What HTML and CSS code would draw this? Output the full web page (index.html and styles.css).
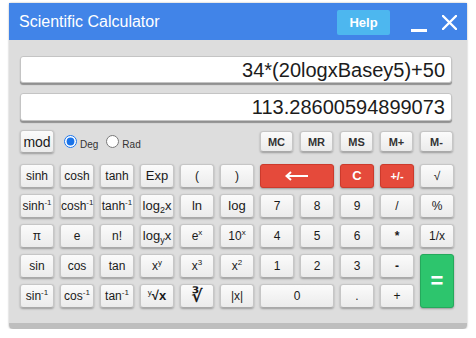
FILE: index.html
```html
<!DOCTYPE html>
<html lang="en">
<head>
    <meta charset="UTF-8">
    <meta name="viewport" content="width=device-width, initial-scale=1.0">
    <title>Scientific Calculator</title>
    <link rel="stylesheet" href="styles.css">
</head>
<body>
    <div class="calc">
        <div class="titlebar">
            <span class="title">Scientific Calculator</span>
            <button class="help">Help</button>
            <svg class="win-btn min" width="16" height="20" viewBox="0 0 16 20">
                <rect x="0" y="17" width="16" height="3" fill="#fff"/>
            </svg>
            <svg class="win-btn close" width="15" height="15" viewBox="0 0 15 15">
                <path d="M1 1 L14 14 M14 1 L1 14" stroke="#fff" stroke-width="2.4" stroke-linecap="round"/>
            </svg>
        </div>

        <div class="body">
            <div class="display">34*(20logxBasey5)+50</div>
            <div class="display result">113.28600594899073</div>

            <div class="mode-row">
                <button class="key mod">mod</button>
                <div class="angle">
                    <label><input type="radio" name="angle" checked><span>Deg</span></label>
                    <label><input type="radio" name="angle"><span>Rad</span></label>
                </div>
                <button class="key mem">MC</button>
                <button class="key mem">MR</button>
                <button class="key mem">MS</button>
                <button class="key mem">M+</button>
                <button class="key mem">M-</button>
            </div>

            <div class="keys">
                <!-- row 1 -->
                <button class="key">sinh</button>
                <button class="key">cosh</button>
                <button class="key">tanh</button>
                <button class="key big">Exp</button>
                <button class="key">(</button>
                <button class="key">)</button>
                <button class="key red wide">
                    <svg class="back" width="24" height="10" viewBox="0 0 24 10">
                        <path d="M23 5 H3 M6 1 L1.5 5 L6 9" stroke="#fff" stroke-width="2" fill="none"/>
                    </svg>
                </button>
                <button class="key red bold">C</button>
                <button class="key red bold small">+/-</button>
                <button class="key">√</button>
                <!-- row 2 -->
                <button class="key">sinh<sup>-1</sup></button>
                <button class="key">cosh<sup>-1</sup></button>
                <button class="key">tanh<sup>-1</sup></button>
                <button class="key big">log<sub>2</sub>x</button>
                <button class="key big">ln</button>
                <button class="key big">log</button>
                <button class="key">7</button>
                <button class="key">8</button>
                <button class="key">9</button>
                <button class="key">/</button>
                <button class="key">%</button>
                <!-- row 3 -->
                <button class="key">π</button>
                <button class="key">e</button>
                <button class="key">n!</button>
                <button class="key big">log<sub>y</sub>x</button>
                <button class="key">e<sup>x</sup></button>
                <button class="key">10<sup>x</sup></button>
                <button class="key">4</button>
                <button class="key">5</button>
                <button class="key">6</button>
                <button class="key bold">*</button>
                <button class="key">1/x</button>
                <!-- row 4 -->
                <button class="key">sin</button>
                <button class="key">cos</button>
                <button class="key">tan</button>
                <button class="key">x<sup>y</sup></button>
                <button class="key">x<sup>3</sup></button>
                <button class="key">x<sup>2</sup></button>
                <button class="key">1</button>
                <button class="key">2</button>
                <button class="key">3</button>
                <button class="key bold">-</button>
                <button class="key green">=</button>
                <!-- row 5 -->
                <button class="key">sin<sup>-1</sup></button>
                <button class="key">cos<sup>-1</sup></button>
                <button class="key">tan<sup>-1</sup></button>
                <button class="key"><sup>y</sup><b>√x</b></button>
                <button class="key root">∛</button>
                <button class="key">|x|</button>
                <button class="key wide">0</button>
                <button class="key">.</button>
                <button class="key">+</button>
            </div>
        </div>
    </div>
</body>
</html>
```

FILE: styles.css
```css
body {
    margin: 0;
    background: #fff;
    font-family: "Liberation Sans", Arial, sans-serif;
}
.calc {
    width: 458px;
    margin: 3px 0 0 9px;
    box-shadow: 0 0 2px rgba(0, 0, 0, 0.35);
    border-radius: 2px 2px 4px 4px;
}
.titlebar {
    height: 37px;
    background: #4184e8;
    display: flex;
    align-items: center;
    padding: 0 10px;
}
.title {
    color: #fff;
    font-size: 16px;
}
.help {
    margin-left: auto;
    width: 53px;
    height: 25px;
    background: #4db7ef;
    border: none;
    border-radius: 2px;
    color: #fff;
    font-family: inherit;
    font-weight: bold;
    font-size: 13px;
    margin-top: 2px;
}
.win-btn {
    display: block;
}
.min {
    margin-left: 21px;
}
.close {
    margin-left: 15px;
    margin-top: 1px;
}
.body {
    background: #dddddd;
    padding: 16px 13px 15px 11px;
    border-bottom: 6px solid #bebebe;
    border-radius: 0 0 4px 4px;
}
.display {
    height: 27px;
    margin-right: 2px;
    background: #fff;
    border: 1px solid #c4c4c4;
    border-radius: 3px;
    box-shadow: 0 2px 1px rgba(0, 0, 0, 0.35);
    box-sizing: border-box;
    font-size: 20px;
    line-height: 26px;
    text-align: right;
    padding-right: 6px;
    color: #1c1c1c;
}
.result {
    height: 28px;
    margin-top: 10px;
    line-height: 27px;
}
.mode-row {
    margin-top: 9px;
    display: grid;
    grid-template-columns: repeat(11, 34px);
    grid-template-rows: 23px;
    column-gap: 6px;
    align-items: center;
}
.angle {
    grid-column: 2 / span 5;
    display: flex;
    align-items: center;
    padding-left: 4px;
}
.angle label {
    display: flex;
    align-items: center;
    font-size: 10px;
    color: #333;
    margin-right: 8px;
}
.angle input {
    margin: 0 3px 0 0;
    width: 13px;
    height: 13px;
    accent-color: #1a73e8;
}
.angle span {
    padding-top: 5px;
}
.keys {
    margin-top: 11px;
    display: grid;
    grid-template-columns: repeat(11, 34px);
    grid-auto-rows: 24px;
    gap: 6px;
}
.key {
    padding: 0;
    background: linear-gradient(#fbfbfb, #ebebeb);
    border: 1px solid #c6c6c6;
    border-bottom-color: #a9a9a9;
    border-radius: 3px;
    box-shadow: 0 1px 2px rgba(0, 0, 0, 0.3);
    font-family: inherit;
    font-size: 12px;
    line-height: 14px;
    color: #1a1a1a;
    white-space: nowrap;
    text-align: center;
}
.key sup {
    font-size: 8px;
    line-height: 0;
    vertical-align: 5px;
}
.key sub {
    font-size: 9px;
    line-height: 0;
    vertical-align: -3px;
}
.back {
    display: block;
    margin: 0 auto;
}
.mod {
    height: 23px;
    font-size: 14px;
}
.mem {
    width: 33px;
    height: 21px;
    font-size: 11px;
    font-weight: bold;
    color: #333;
}
.big {
    font-size: 13px;
}
.bold {
    font-weight: bold;
}
.small {
    font-size: 11px;
}
.wide {
    grid-column: span 2;
}
.red {
    background: #e54a3b;
    border-color: #cc3a2c;
    color: #fff;
    font-size: 13px;
}
.red.small {
    font-size: 11px;
}
.green {
    grid-row: span 2;
    background: #2dc56d;
    border-color: #25a95c;
    color: #fff;
    font-size: 22px;
    font-weight: bold;
}
.root {
    font-family: "DejaVu Sans", sans-serif;
    font-size: 17px;
    font-weight: bold;
}
.key b {
    font-size: 13px;
}
```
